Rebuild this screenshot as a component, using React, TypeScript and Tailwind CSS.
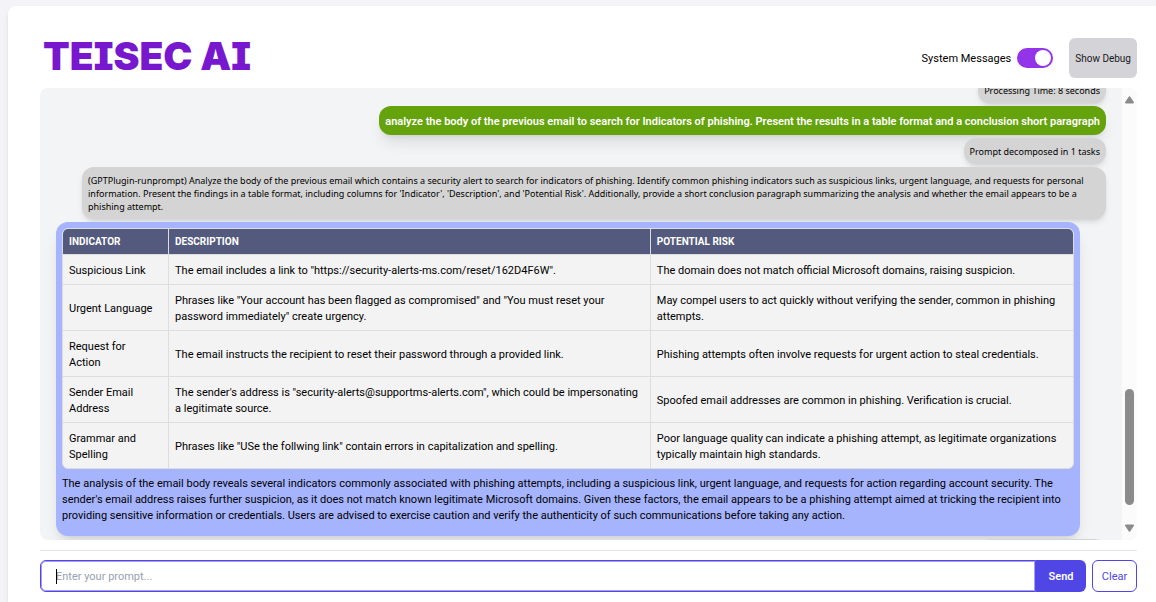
import { useLayoutEffect, useRef, useState } from "react";
import type { ReactNode } from "react";

const rows = [
  {
    indicator: "Suspicious Link",
    description: 'The email includes a link to "https://security-alerts-ms.com/reset/162D4F6W".',
    risk: "The domain does not match official Microsoft domains, raising suspicion.",
  },
  {
    indicator: "Urgent Language",
    description:
      'Phrases like "Your account has been flagged as compromised" and "You must reset your password immediately" create urgency.',
    risk: "May compel users to act quickly without verifying the sender, common in phishing attempts.",
  },
  {
    indicator: "Request for Action",
    description: "The email instructs the recipient to reset their password through a provided link.",
    risk: "Phishing attempts often involve requests for urgent action to steal credentials.",
  },
  {
    indicator: "Sender Email Address",
    description:
      'The sender\'s address is "security-alerts@supportms-alerts.com", which could be impersonating a legitimate source.',
    risk: "Spoofed email addresses are common in phishing. Verification is crucial.",
  },
  {
    indicator: "Grammar and Spelling",
    description: 'Phrases like "USe the follwing link" contain errors in capitalization and spelling.',
    risk: "Poor language quality can indicate a phishing attempt, as legitimate organizations typically maintain high standards.",
  },
];

function SystemMessage({ children }: { children: ReactNode }) {
  return (
    <div className="max-w-5xl shrink-0 self-end rounded-xl bg-[#d4d4d4] px-1.5 pt-[7px] pb-1.5 font-['Noto_Sans',sans-serif] text-[9px] leading-[13px] text-black shadow-md">
      {children}
    </div>
  );
}

function FindingsTable() {
  return (
    <div className="overflow-hidden rounded-md border border-[#dddddd] bg-[#f3f3f3]">
      <table className="w-full table-fixed border-separate border-spacing-0 text-left text-[11px]">
        <colgroup>
          <col className="w-[10.5%]" />
          <col className="w-[47.7%]" />
          <col />
        </colgroup>
        <thead className="bg-[#535a7d] text-[10px] leading-[13px] font-bold text-white uppercase">
          <tr>
            <th className="border-r border-b border-[#dddddd] p-1.5">Indicator</th>
            <th className="border-r border-b border-[#dddddd] p-1.5">Description</th>
            <th className="border-b border-[#dddddd] p-1.5">Potential Risk</th>
          </tr>
        </thead>
        <tbody className="leading-4">
          {rows.map((row, i) => {
            const line = i < rows.length - 1 ? "border-b" : "";
            return (
              <tr key={row.indicator}>
                <td className={`border-r border-[#dddddd] pt-2 pr-3 pb-[5px] pl-1.5 ${line}`}>{row.indicator}</td>
                <td className={`border-r border-[#dddddd] px-1.5 pt-2 pb-[5px] ${line}`}>{row.description}</td>
                <td className={`border-[#dddddd] px-1.5 pt-2 pb-[5px] ${line}`}>{row.risk}</td>
              </tr>
            );
          })}
        </tbody>
      </table>
    </div>
  );
}

function ScrollTrack() {
  return (
    <div className="flex w-[15px] shrink-0 flex-col items-center justify-between bg-[#fbfbfb] py-2" aria-hidden="true">
      <svg className="h-2 w-[9px]" viewBox="0 0 9 8" fill="#8b8b8b">
        <path d="M3.9.5a.8.8 0 0 1 1.2 0L8.8 6c.4.7.1 1.4-.6 1.4H.8C.1 7.4-.2 6.7.2 6Z" />
      </svg>
      <div className="flex w-full flex-1 flex-col items-center">
        <div className="flex-[285]" />
        <div className="w-[9px] flex-[116] rounded-full bg-[#8b8b8b]" />
        <div className="flex-[19]" />
      </div>
      <svg className="h-2 w-[9px]" viewBox="0 0 9 8" fill="#8b8b8b">
        <path d="M3.9 7.5a.8.8 0 0 0 1.2 0L8.8 2C9.2 1.3 8.9.6 8.2.6H.8C.1.6-.2 1.3.2 2Z" />
      </svg>
    </div>
  );
}

export default function App() {
  const feed = useRef<HTMLDivElement>(null);
  const [systemMessages, setSystemMessages] = useState(true);
  const [prompt, setPrompt] = useState("");

  useLayoutEffect(() => {
    if (feed.current) feed.current.scrollTop = 11;
  }, []);

  return (
    <div className="flex h-screen flex-col bg-[#f3f3f8] pt-1.5 pl-2 font-['Roboto','Noto_Sans',sans-serif] text-black">
      <main className="flex min-h-0 flex-1 flex-col rounded-tl-lg bg-white pr-[19px] pb-2.5 pl-8 shadow-md">
        <header className="flex shrink-0 items-center justify-between pt-8 pb-2.5">
          <h1 className="pb-1 pl-[3px] font-['Inter',sans-serif] text-[39px] leading-9 font-black text-[#7718cf] [font-feature-settings:'cv08']">
            TEISEC AI
          </h1>
          <div className="flex items-center gap-4">
            <label className="flex cursor-pointer items-center gap-1.5 text-[11px] leading-4">
              <span className="pt-0.5">System Messages</span>
              <input
                type="checkbox"
                role="switch"
                className="peer sr-only"
                checked={systemMessages}
                onChange={(e) => setSystemMessages(e.target.checked)}
              />
              <span className="flex h-5 w-9 items-center rounded-full bg-gray-300 p-0.5 peer-checked:justify-end peer-checked:bg-[#9333ea]">
                <span className="size-4 rounded-full bg-white" />
              </span>
            </label>
            <button type="button" className="h-10 rounded-md bg-[#d4d4d8] px-1.5 text-[10px] text-[#18181b]">
              Show Debug
            </button>
          </div>
        </header>

        <section className="flex min-h-0 flex-1 overflow-hidden rounded-lg bg-gray-100">
          <div
            ref={feed}
            className="flex min-w-0 flex-1 flex-col gap-[3px] overflow-y-auto px-4 [scrollbar-width:none]"
          >
            <SystemMessage>Processing Time: 8 seconds</SystemMessage>
            <div className="max-w-5xl shrink-0 self-end rounded-xl bg-[#65a30d] px-1.5 pt-[7px] pb-[5px] text-[11px] leading-[17px] font-semibold text-white shadow-lg">
              analyze the body of the previous email to search for Indicators of phishing. Present the results in a
              table format and a conclusion short paragraph
            </div>
            <SystemMessage>Prompt decomposed in 1 tasks</SystemMessage>
            <SystemMessage>
              (GPTPlugin-runprompt) Analyze the body of the previous email which contains a security alert to search
              for indicators of phishing. Identify common phishing indicators such as suspicious links, urgent
              language, and requests for personal information. Present the findings in a table format, including
              columns for 'Indicator', 'Description', and 'Potential Risk'. Additionally, provide a short conclusion
              paragraph summarizing the analysis and whether the email appears to be a phishing attempt.
            </SystemMessage>
            <article className="flex max-w-5xl shrink-0 flex-col gap-[7px] self-start rounded-xl bg-[#a5b4fc] px-1.5 pt-1.5 pb-3 shadow-lg">
              <FindingsTable />
              <p className="text-[11px] leading-4">
                The analysis of the email body reveals several indicators commonly associated with phishing attempts,
                including a suspicious link, urgent language, and requests for action regarding account security. The
                sender's email address raises further suspicion, as it does not match known legitimate Microsoft
                domains. Given these factors, the email appears to be a phishing attempt aimed at tricking the
                recipient into providing sensitive information or credentials. Users are advised to exercise caution
                and verify the authenticity of such communications before taking any action.
              </p>
            </article>
            <SystemMessage>Processing Time: 9 seconds</SystemMessage>
          </div>
          <ScrollTrack />
        </section>

        <hr className="mt-2.5 mb-[9px] shrink-0 border-gray-200" />

        <form className="flex h-8 shrink-0 gap-1.5 text-[11px]" onSubmit={(e) => e.preventDefault()}>
          <div className="relative flex min-w-0 flex-1">
            <input
              type="text"
              aria-label="Prompt"
              placeholder="Enter your prompt..."
              value={prompt}
              onChange={(e) => setPrompt(e.target.value)}
              className="min-w-0 flex-1 rounded-l-md border border-[#4f46e5] bg-white px-[15px] pt-[3px] ring-1 ring-[#a5a0f2] outline-none ring-inset placeholder:text-gray-400"
            />
            <span className="absolute top-[9px] left-4 h-[15px] w-px bg-black" aria-hidden="true" />
            <button type="submit" className="w-[50px] rounded-r-md bg-[#4f46e5] pt-0.5 font-semibold text-white">
              Send
            </button>
          </div>
          <button
            type="button"
            onClick={() => setPrompt("")}
            className="w-[45px] rounded-md border border-[#4f46e5] bg-white pt-0.5 text-[#4f46e5]"
          >
            Clear
          </button>
        </form>
      </main>
    </div>
  );
}
